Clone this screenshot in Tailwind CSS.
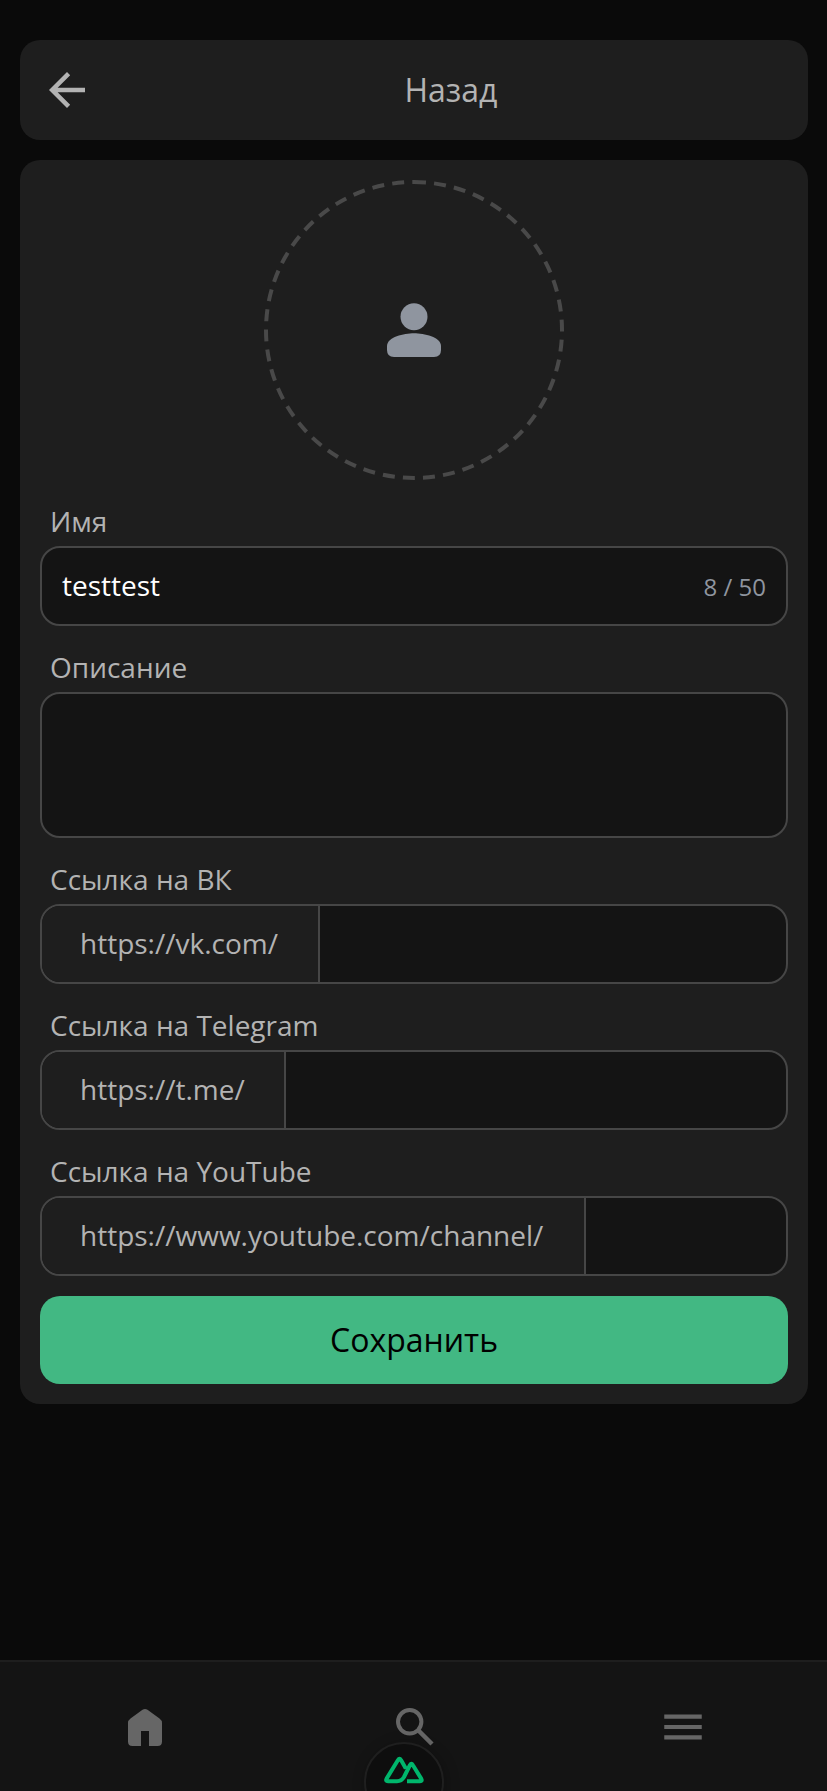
<!DOCTYPE html>
<html lang="ru">
<head>
<meta charset="utf-8">
<title>Назад</title>
<script src="https://cdn.jsdelivr.net/npm/@tailwindcss/browser@4"></script>
</head>
<body class="w-[828px] h-[1791px] overflow-hidden bg-[#0a0a0a] font-['Open_Sans','Noto_Sans',sans-serif] text-[28px] leading-[42px] text-[#b3b3b3]">
<div class="flex h-[1791px] flex-col">
  <header class="mx-5 mt-10 flex h-[100px] shrink-0 items-center rounded-[20px] bg-[#1e1e1e] pl-5">
    <svg class="h-[54px] w-[54px] shrink-0" viewBox="0 0 24 24" fill="#b3b3b3"><path d="M20 11H7.83l5.59-5.59L12 4l-8 8 8 8 1.41-1.41L7.83 13H20z"/></svg>
    <h1 class="flex-1 text-center text-[32px] leading-[48px]">Назад</h1>
  </header>

  <main class="mx-5 mt-5 flex h-[1244px] shrink-0 flex-col rounded-[20px] bg-[#1e1e1e] p-5">
    <svg class="h-[300px] w-[300px] shrink-0 self-center" viewBox="0 0 300 300">
      <circle cx="150" cy="150" r="148" fill="none" stroke="#494949" stroke-width="4" stroke-dasharray="12 8.170" transform="rotate(-90 150 150)"/>
      <g fill="#8f959f" transform="translate(123 123)"><circle cx="27" cy="13.700" r="13.500"/><path d="M27 30.200C17 30.200 0 34 0 43v4q0 7 7 7h40q7 0 7-7v-4C54 34 37 30.200 27 30.200z"/></g>
    </svg>

    <label class="mt-5 pl-[10px]">Имя</label>
    <div class="mt-1 flex h-20 shrink-0 items-center justify-between rounded-[20px] border-2 border-[#464646] bg-[#141414] px-5">
      <span class="pb-0.5 text-white">testtest</span><span class="pt-px text-2xl text-[#8f959f]">8 / 50</span>
    </div>

    <label class="mt-5 pl-[10px]">Описание</label>
    <div class="mt-1 h-[146px] shrink-0 rounded-[20px] border-2 border-[#464646] bg-[#141414]"></div>

    <label class="mt-5 pl-[10px]">Ссылка на ВК</label>
    <div class="mt-1 flex h-20 shrink-0 overflow-hidden rounded-[20px] border-2 border-[#464646] bg-[#141414]">
      <span class="flex w-[278px] items-center border-r-2 border-[#464646] bg-[#1e1e1e] pb-0.5 pl-[38px]">https://vk.com/</span>
    </div>

    <label class="mt-5 pl-[10px]">Ссылка на Telegram</label>
    <div class="mt-1 flex h-20 shrink-0 overflow-hidden rounded-[20px] border-2 border-[#464646] bg-[#141414]">
      <span class="flex w-[244px] items-center border-r-2 border-[#464646] bg-[#1e1e1e] pb-0.5 pl-[38px]">https://t.me/</span>
    </div>

    <label class="mt-5 pl-[10px]">Ссылка на YouTube</label>
    <div class="mt-1 flex h-20 shrink-0 overflow-hidden rounded-[20px] border-2 border-[#464646] bg-[#141414]">
      <span class="flex w-[544px] items-center border-r-2 border-[#464646] bg-[#1e1e1e] pb-0.5 pl-[38px]">https://www.youtube.com/channel/</span>
    </div>

    <button class="mt-5 h-[88px] shrink-0 rounded-[20px] bg-[#42b883] text-[32px] leading-[48px] text-black">Сохранить</button>
  </main>

  <nav class="relative mt-auto flex h-[131px] shrink-0 justify-between border-t-2 border-[#1e1e1e] bg-[#141414] px-[120px] pt-10">
    <svg class="h-[50px] w-[50px]" viewBox="0 0 50 50" fill="#666"><path d="M22.500 7.800Q25 6 27.500 7.800L39.500 16.500Q42 18.300 42 21V39.500Q42 44 37.500 44H29V29H21V44H12.500Q8 44 8 39.500V21Q8 18.300 10.500 16.500Z"/></svg>
    <svg class="h-[50px] w-[50px]" viewBox="0 0 50 50" fill="none" stroke="#666" stroke-width="4"><circle cx="20.700" cy="19.800" r="11.700"/><path d="M29 28L43 42" stroke-width="4.500"/></svg>
    <svg class="h-[50px] w-[50px]" viewBox="0 0 24 24" fill="#666"><path d="M3 18h18v-2H3v2zm0-5h18v-2H3v2zm0-7v2h18V6H3z"/></svg>
    <div class="absolute left-[364px] top-20 flex h-20 w-20 justify-center rounded-full border-2 border-[#1f1f1f] bg-[#0e0e0e] pt-3 shadow-[2px_2px_14px_rgba(0,0,0,0.25)]">
      <svg class="h-[28px] w-[40px]" viewBox="0 0 40 28" fill="none" stroke="#00b66c" stroke-width="4" stroke-linejoin="round"><path d="M21.800 12.500L17 4Q15.500 1.600 14 4L2.600 22.600Q1.200 25.200 4 25.200H13Q17.500 25.200 20 21L26 9Q27.400 6.600 28.800 9L37.200 22.600Q38.600 25.200 36 25.200H23"/></svg>
    </div>
  </nav>
</div>
</body>
</html>
